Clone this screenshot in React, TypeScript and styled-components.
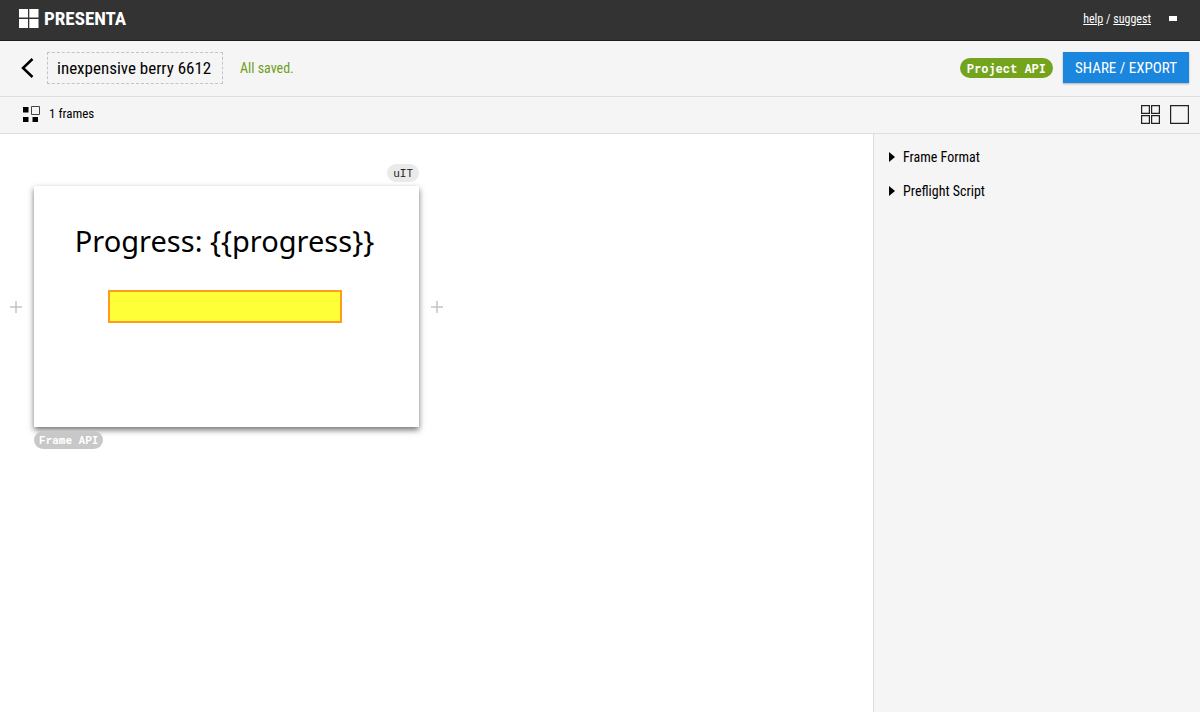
import React, { useState } from "react";
import styled, { createGlobalStyle } from "styled-components";

const GlobalStyle = createGlobalStyle`
  *, *::before, *::after { box-sizing: border-box; }
  body {
    margin: 0;
    background: #fff;
    color: #000;
    font-family: "Roboto Condensed", "Liberation Sans Narrow", Roboto, sans-serif;
    font-size: 14px;
    line-height: 20px;
  }
  button, input { font: inherit; color: inherit; }
`;

const Page = styled.div`
  display: flex;
  flex-direction: column;
  min-height: 100vh;
`;

const Bar = styled.header`
  display: flex;
  align-items: center;
  justify-content: space-between;
  height: 41px;
  padding: 0 23px 3px 19px;
  background: #333;
  border-bottom: 1px solid #1c1c1c;
  color: #fff;
`;

const Brand = styled.a`
  display: flex;
  align-items: center;
  gap: 5px;
  color: #fff;
  text-decoration: none;
  font-size: 19px;
  font-weight: 700;
`;

const HelpLinks = styled.nav`
  display: flex;
  align-items: center;
  gap: 18px;
  font-size: 12px;
  a { color: #fff; }
`;

const PlainButton = styled.button`
  display: flex;
  padding: 0;
  border: 0;
  background: none;
  color: inherit;
  cursor: pointer;
`;

const Toolbar = styled.div<{ $height: number }>`
  display: flex;
  align-items: center;
  justify-content: space-between;
  height: ${(p) => p.$height}px;
  padding: 0 11px 2px 21px;
  background: #f5f5f5;
  border-bottom: 1px solid #dedede;
`;

const Group = styled.div<{ $gap: number }>`
  display: flex;
  align-items: center;
  gap: ${(p) => p.$gap}px;
`;

const TitleInput = styled.input`
  width: 176px;
  height: 32px;
  padding: 0 9px;
  border: 1px dashed #c4c4c4;
  background: transparent;
  font-size: 17px;
  color: #000;
`;

const Saved = styled.span`
  margin-left: 4px;
  color: #6f9f20;
`;

const FrameCount = styled.span`
  font-size: 13px;
`;

const Pill = styled.button<{ $tone: "green" | "grey" | "light" }>`
  height: ${(p) => (p.$tone === "green" ? 20 : 18)}px;
  padding: 0 ${(p) => ({ green: 7, grey: 5, light: 6 })[p.$tone]}px;
  border: 0;
  border-radius: 10px;
  background: ${(p) => ({ green: "#74a31c", grey: "#c8c8c8", light: "#eaeaea" })[p.$tone]};
  color: ${(p) => (p.$tone === "light" ? "#222" : "#fff")};
  font-family: "Roboto Mono", "DejaVu Sans Mono", monospace;
  font-size: ${(p) => (p.$tone === "green" ? 12 : 11)}px;
  font-weight: ${(p) => (p.$tone === "light" ? 400 : 700)};
  line-height: 18px;
  cursor: pointer;
`;

const ShareButton = styled.button`
  height: 31px;
  padding: 0 12px;
  border: 0;
  background: #1a86dd;
  box-shadow: 0 1px 2px rgba(0, 0, 0, 0.3);
  color: #fff;
  font-size: 15px;
  cursor: pointer;
`;

const Body = styled.div`
  display: flex;
  flex: 1;
`;

const Workspace = styled.main`
  flex: 1;
  padding: 28px 10px;
`;

const FrameItem = styled.article`
  display: inline-flex;
  flex-direction: column;
  gap: 4px;
`;

const FrameRow = styled.div`
  display: flex;
  align-items: center;
  gap: 12px;
`;

const FrameTag = styled.div<{ $align: "start" | "end" }>`
  display: flex;
  justify-content: flex-${(p) => p.$align};
  padding: 0 24px;
`;

const Slide = styled.section`
  display: flex;
  flex-direction: column;
  align-items: center;
  gap: 27px;
  width: 385px;
  height: 241px;
  padding: 33px 4px 0 0;
  background: #fff;
  box-shadow: 0 3px 6px rgba(0, 0, 0, 0.55);
`;

const SlideTitle = styled.h1`
  margin: 0;
  font-family: "Trebuchet MS", "Noto Sans", sans-serif;
  font-size: 29px;
  font-weight: 400;
  line-height: 44px;
  white-space: nowrap;
  color: #000;
`;

const ProgressBox = styled.div`
  width: 234px;
  height: 33px;
  border: 2px solid #ff9c20;
  background: #ffff38;
`;

const Sidebar = styled.aside`
  display: flex;
  flex-direction: column;
  gap: 14px;
  width: 327px;
  padding: 13px 15px;
  border-left: 1px solid #dedede;
  background: #f5f5f5;
`;

const Panel = styled.details`
  summary {
    display: flex;
    align-items: center;
    gap: 8px;
    list-style: none;
    cursor: pointer;
  }
  &[open] svg { transform: rotate(90deg); }
`;

const Plus = () => (
  <svg width="12" height="12" viewBox="0 0 12 12" stroke="#c4c4c4" strokeWidth="1.5" aria-hidden="true">
    <path d="M6 0V12M0 6H12" />
  </svg>
);

const Section = ({ label }: { label: string }) => (
  <Panel>
    <summary>
      <svg width="6" height="10" viewBox="0 0 6 10" aria-hidden="true">
        <path d="M0 0L6 5L0 10Z" />
      </svg>
      {label}
    </summary>
  </Panel>
);

export default function App() {
  const [title, setTitle] = useState("inexpensive berry 6612");
  return (
    <Page>
      <GlobalStyle />
      <Bar>
        <Brand href="#">
          <svg width="20" height="19" viewBox="0 0 20 19" fill="#fff" aria-hidden="true">
            <path d="M0 0H9V8.500H0ZM10.300 0H19.500V8.500H10.300ZM0 10H9V19H0ZM10.300 10H19.500V19H10.300Z" />
          </svg>
          PRESENTA
        </Brand>
        <HelpLinks>
          <span>
            <a href="#help">help</a> / <a href="#suggest">suggest</a>
          </span>
          <PlainButton aria-label="Menu">
            <svg width="8" height="5" viewBox="0 0 8 5" fill="#fff">
              <path d="M0 0H8V5H0Z" />
            </svg>
          </PlainButton>
        </HelpLinks>
      </Bar>
      <Toolbar $height={56}>
        <Group $gap={13}>
          <PlainButton aria-label="Back">
            <svg width="13" height="20" viewBox="0 0 13 20" fill="none" stroke="#000" strokeWidth="2.500">
              <path d="M11.500 1L2 10L11.500 19" />
            </svg>
          </PlainButton>
          <TitleInput aria-label="Project title" value={title} onChange={(e) => setTitle(e.target.value)} />
          <Saved>All saved.</Saved>
        </Group>
        <Group $gap={10}>
          <Pill $tone="green">Project API</Pill>
          <ShareButton>SHARE / EXPORT</ShareButton>
        </Group>
      </Toolbar>
      <Toolbar $height={37}>
        <Group $gap={9}>
          <svg width="19" height="18" viewBox="0 0 19 18" aria-hidden="true">
            <path d="M2 2H7.500V7.500H2ZM2 12H7.500V17H2ZM11.500 12H17V17H11.500Z" />
            <path d="M10.500 1.500H18.500V9.500H10.500Z" fill="none" stroke="#444" />
          </svg>
          <FrameCount>1 frames</FrameCount>
        </Group>
        <Group $gap={10}>
          <PlainButton aria-label="Grid view">
            <svg width="19" height="19" viewBox="0 0 19 19" fill="none" stroke="#222" strokeWidth="1.200">
              <path d="M.6 .6H8.400V8.400H.6ZM10.600 .6H18.400V8.400H10.600ZM.6 10.600H8.400V18.400H.6ZM10.600 10.600H18.400V18.400H10.600Z" />
            </svg>
          </PlainButton>
          <PlainButton aria-label="Single view">
            <svg width="19" height="19" viewBox="0 0 19 19" fill="none" stroke="#222" strokeWidth="1.200">
              <path d="M.6 .6H18.400V18.400H.6Z" />
            </svg>
          </PlainButton>
        </Group>
      </Toolbar>
      <Body>
        <Workspace>
          <FrameItem>
            <FrameTag $align="end">
              <Pill $tone="light">uIT</Pill>
            </FrameTag>
            <FrameRow>
              <PlainButton aria-label="Add frame before">
                <Plus />
              </PlainButton>
              <Slide>
                <SlideTitle>{"Progress: {{progress}}"}</SlideTitle>
                <ProgressBox />
              </Slide>
              <PlainButton aria-label="Add frame after">
                <Plus />
              </PlainButton>
            </FrameRow>
            <FrameTag $align="start">
              <Pill $tone="grey">Frame API</Pill>
            </FrameTag>
          </FrameItem>
        </Workspace>
        <Sidebar>
          <Section label="Frame Format" />
          <Section label="Preflight Script" />
        </Sidebar>
      </Body>
    </Page>
  );
}
